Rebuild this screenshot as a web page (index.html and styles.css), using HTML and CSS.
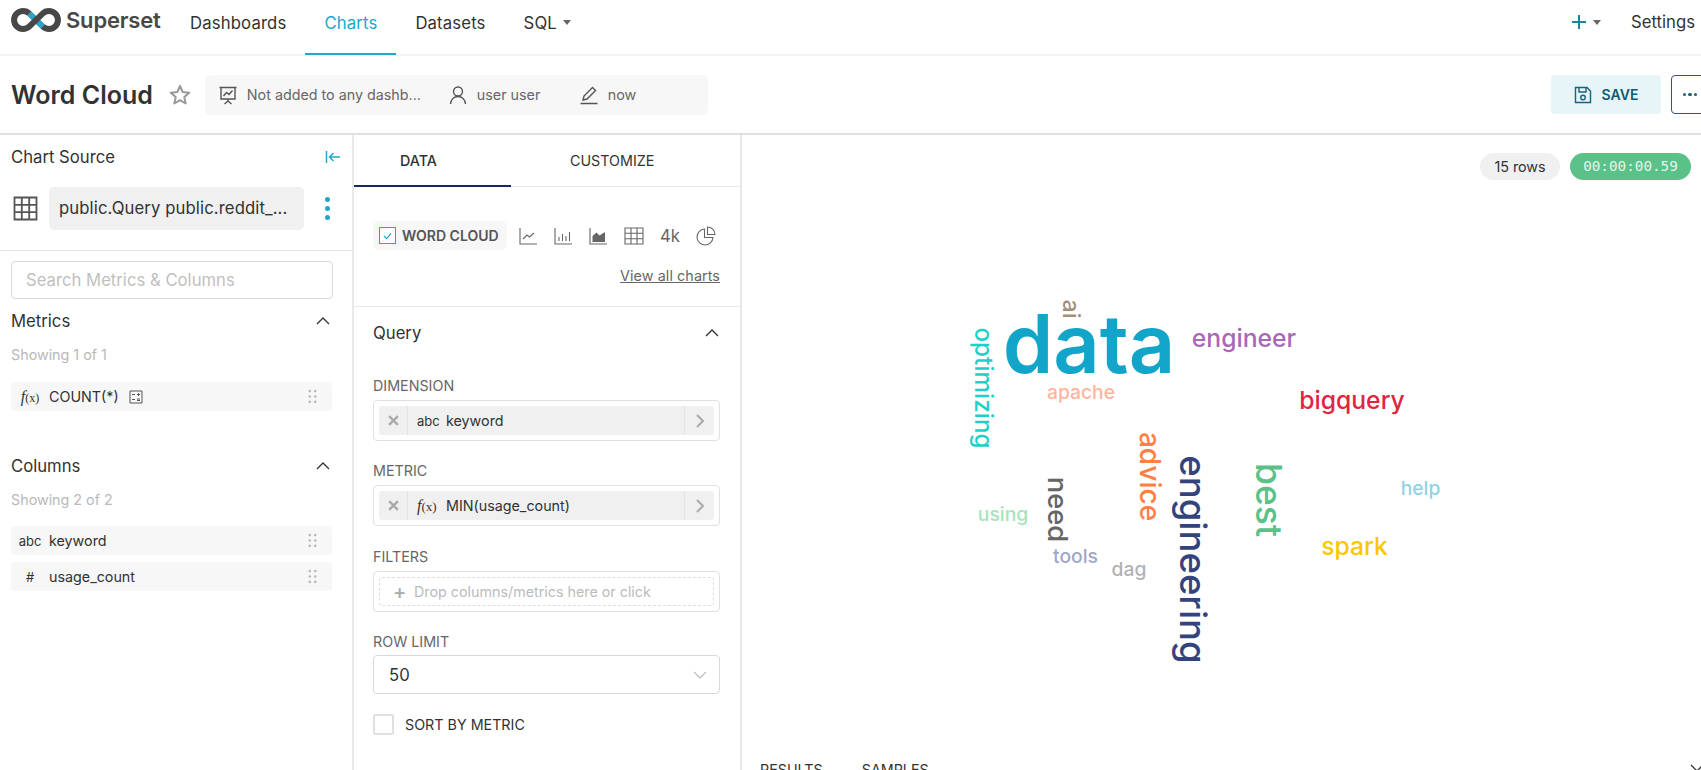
FILE: index.html
```html
<!DOCTYPE html>
<html>
  <head>
    <meta charset="utf-8" />
    <title>Word Cloud</title>
    <link rel="stylesheet" href="styles.css">
  </head>

  <body>
    <!-- top nav -->
    <header class="navbar">
      <div class="brand">
        <svg class="brand-logo" viewBox="0 0 50 24">
          <path class="logo-blue" d="M18.4 5.6L31.6 18.4" />
          <path class="logo-dark" d="M18.4 5.6A9 9 0 1 0 18.4 18.4L31.6 5.6A9 9 0 1 1 31.6 18.4" />
        </svg>
        <span class="brand-name">Superset</span>
      </div>
      <nav class="nav-links">
        <a class="nav-link">Dashboards</a>
        <a class="nav-link active">Charts</a>
        <a class="nav-link">Datasets</a>
        <a class="nav-link">SQL <i class="caret"></i></a>
      </nav>
      <div class="nav-right">
        <svg class="nav-plus" viewBox="0 0 16 16"><path d="M8 1V15M1 8H15" /></svg>
        <i class="caret"></i>
        <a class="nav-settings">Settings</a>
      </div>
    </header>

    <!-- chart title -->
    <section class="title-bar">
      <h1 class="chart-title">Word Cloud</h1>
      <svg class="star" viewBox="0 0 24 24"><path d="M12 3l2.7 6 6.5.7-4.9 4.4 1.4 6.4L12 17.2l-5.7 3.3 1.4-6.4-4.9-4.4 6.5-.7z" /></svg>
      <div class="meta-bar">
        <div class="meta-item meta-dash">
          <svg class="meta-icon" viewBox="0 0 20 20">
            <path d="M1.5 2.5H18.5M3 2.5V14H17V2.5M10 14V16M10 16L6.5 19M10 16L13.5 19M5.5 11L8.5 7.5L11 9.5L14.5 5.5" />
          </svg>
          <span>Not added to any dashb...</span>
        </div>
        <div class="meta-item meta-user">
          <svg class="meta-icon" viewBox="0 0 20 20">
            <circle cx="10" cy="6.5" r="4.5" />
            <path d="M2.5 19C3 14.5 6 11.5 10 11.5S17 14.5 17.5 19" />
          </svg>
          <span>user user</span>
        </div>
        <div class="meta-item">
          <svg class="meta-icon" viewBox="0 0 20 20">
            <path d="M1.5 18.5H18.5M4 15L5 11L13.5 2.5L16.5 5.5L8 14Z" />
          </svg>
          <span>now</span>
        </div>
      </div>
      <div class="title-actions">
        <button class="btn-save">
          <svg class="save-icon" viewBox="0 0 18 18">
            <path d="M1.5 1.5H13L16.5 5V16.5H1.5ZM5 1.5V6H12V1.5" />
            <circle cx="9" cy="11.5" r="2.3" />
          </svg>
          SAVE
        </button>
        <button class="btn-more"><i></i><i></i><i></i></button>
      </div>
    </section>

    <main class="explore">
      <!-- chart source -->
      <aside class="source-panel">
        <div class="source-top">
          <div class="panel-head">
            <span>Chart Source</span>
            <svg class="collapse-icon" viewBox="0 0 16 14"><path d="M1.5 1V13M15 7H4.5M8.5 3L4.5 7L8.5 11" /></svg>
          </div>
          <div class="source-row">
            <svg class="table-icon" viewBox="0 0 25 25"><path d="M1.5 1.5H23.5V23.5H1.5ZM1.5 8.8H23.5M1.5 16.2H23.5M8.8 1.5V23.5M16.2 1.5V23.5" /></svg>
            <div class="source-name">public.Query public.reddit_...</div>
            <div class="source-dots"><i></i><i></i><i></i></div>
          </div>
        </div>
        <div class="source-search">Search Metrics &amp; Columns</div>

        <div class="list-head">
          <span>Metrics</span>
          <svg class="chevron" viewBox="0 0 14 8"><path d="M1 7L7 1L13 7" /></svg>
        </div>
        <div class="list-count">Showing 1 of 1</div>
        <div class="list-row list-row-metric">
          <span class="type-tag fx"><em>f</em>(x)</span>
          <span>COUNT(*)</span>
          <svg class="calc-icon" viewBox="0 0 14 14"><path d="M1 1H13V13H1ZM3 4.5H6M8 4.5H11M3 9.5H6M8 9H11M8 10.5H11M9.5 3V6" /></svg>
          <svg class="grip" viewBox="0 0 10 16"><use href="#grip-dots" /></svg>
        </div>

        <div class="list-head list-head-columns">
          <span>Columns</span>
          <svg class="chevron" viewBox="0 0 14 8"><path d="M1 7L7 1L13 7" /></svg>
        </div>
        <div class="list-count">Showing 2 of 2</div>
        <div class="list-row">
          <span class="type-tag">abc</span>
          <span>keyword</span>
          <svg class="grip" viewBox="0 0 10 16"><use href="#grip-dots" /></svg>
        </div>
        <div class="list-row list-row-next">
          <span class="type-tag">#</span>
          <span>usage_count</span>
          <svg class="grip" viewBox="0 0 10 16"><use href="#grip-dots" /></svg>
        </div>
      </aside>

      <!-- controls -->
      <section class="control-panel">
        <div class="tabs">
          <div class="tab tab-data">DATA</div>
          <div class="tab tab-custom">CUSTOMIZE</div>
        </div>

        <div class="viz-block">
          <div class="viz-row">
            <div class="viz-active">
              <span class="viz-check">
                <svg viewBox="0 0 10 8"><path d="M1 4L4 7L9 1" /></svg>
              </span>
              WORD CLOUD
            </div>
            <svg class="viz-icon" viewBox="0 0 18 18"><path d="M1 1V17H18M4 12L8 8L10.5 10L15 6" /></svg>
            <svg class="viz-icon" viewBox="0 0 18 18"><path d="M1 1V17H18M5 14V10M8.5 14V7M12 14V9M15.5 14V5" /></svg>
            <svg class="viz-icon" viewBox="0 0 18 18">
              <path d="M1 1V17H18" />
              <path class="solid" d="M3.5 15V9L7.5 5.5L10.5 8.5L16 5V15Z" />
            </svg>
            <svg class="viz-icon viz-table" viewBox="0 0 20 18"><path d="M1 1H19V17H1ZM1 6.3H19M1 11.7H19M7 1V17M13 1V17" /></svg>
            <span class="viz-4k">4k</span>
            <svg class="viz-icon viz-pie" viewBox="0 0 20 20"><path d="M8.5 3A8 8 0 1 0 17 11.5H8.5ZM11.5 1A7.5 7.5 0 0 1 19 8.5H11.5Z" /></svg>
          </div>
          <a class="view-all">View all charts</a>
        </div>

        <div class="query-head">
          <span>Query</span>
          <svg class="chevron" viewBox="0 0 14 8"><path d="M1 7L7 1L13 7" /></svg>
        </div>

        <div class="field field-dimension">
          <div class="field-label">DIMENSION</div>
          <div class="field-box">
            <div class="pill">
              <span class="pill-x"><svg viewBox="0 0 10 10"><path d="M1 1L9 9M9 1L1 9" /></svg></span>
              <span class="pill-body"><span class="pill-type">abc</span>keyword</span>
              <span class="pill-arrow"><svg viewBox="0 0 8 14"><path d="M1 1L7 7L1 13" /></svg></span>
            </div>
          </div>
        </div>

        <div class="field field-metric">
          <div class="field-label">METRIC</div>
          <div class="field-box">
            <div class="pill">
              <span class="pill-x"><svg viewBox="0 0 10 10"><path d="M1 1L9 9M9 1L1 9" /></svg></span>
              <span class="pill-body"><span class="pill-type fx"><em>f</em>(x)</span>MIN(usage_count)</span>
              <span class="pill-arrow"><svg viewBox="0 0 8 14"><path d="M1 1L7 7L1 13" /></svg></span>
            </div>
          </div>
        </div>

        <div class="field">
          <div class="field-label">FILTERS</div>
          <div class="field-box">
            <div class="drop-zone"><span class="drop-plus">+</span>Drop columns/metrics here or click</div>
          </div>
        </div>

        <div class="field field-limit">
          <div class="field-label">ROW LIMIT</div>
          <div class="select-box">
            <span>50</span>
            <svg class="select-arrow" viewBox="0 0 14 8"><path d="M1 1L7 7L13 1" /></svg>
          </div>
        </div>

        <label class="sort-row">
          <span class="sort-check"></span>
          SORT BY METRIC
        </label>
      </section>

      <!-- chart -->
      <section class="chart-panel">
        <div class="chart-stats">
          <span class="stat-rows">15 rows</span>
          <span class="stat-time">00:00:00.59</span>
        </div>
        <svg class="word-cloud" width="959" height="500">
          <text class="w w-data" transform="translate(347 183)">data</text>
          <text class="w w-ai" transform="translate(321 119) rotate(90)">ai</text>
          <text class="w w-optimizing" transform="translate(233 198) rotate(90)">optimizing</text>
          <text class="w w-engineer" transform="translate(502 157)">engineer</text>
          <text class="w w-apache" transform="translate(339 209)">apache</text>
          <text class="w w-bigquery" transform="translate(610 219)">bigquery</text>
          <text class="w w-advice" transform="translate(398 286.5) rotate(90)">advice</text>
          <text class="w w-engineering" transform="translate(438 369.5) rotate(90)">engineering</text>
          <text class="w w-best" transform="translate(514 310) rotate(90)">best</text>
          <text class="w w-need" transform="translate(306 319.5) rotate(90)">need</text>
          <text class="w w-help" transform="translate(678.5 305)">help</text>
          <text class="w w-using" transform="translate(261 331)">using</text>
          <text class="w w-spark" transform="translate(612.5 365)">spark</text>
          <text class="w w-tools" transform="translate(333.5 373)">tools</text>
          <text class="w w-dag" transform="translate(387 386)">dag</text>
        </svg>
        <div class="result-tabs">
          <span>RESULTS</span>
          <span>SAMPLES</span>
          <svg class="result-chevron" viewBox="0 0 14 8"><path d="M1 1L7 7L13 1" /></svg>
        </div>
      </section>
    </main>

    <svg class="svg-defs" width="0" height="0">
      <defs>
        <g id="grip-dots">
          <circle cx="2" cy="2" r="1.5" /><circle cx="8" cy="2" r="1.5" />
          <circle cx="2" cy="8" r="1.5" /><circle cx="8" cy="8" r="1.5" />
          <circle cx="2" cy="14" r="1.5" /><circle cx="8" cy="14" r="1.5" />
        </g>
      </defs>
    </svg>
  </body>
</html>
```

FILE: styles.css
```css
* {
  box-sizing: border-box;
}

body {
  margin: 0;
  height: 770px;
  overflow: hidden;
  background: #fff;
  font-family: "Inter", "Noto Sans", sans-serif;
  font-size: 14.3px;
  color: #323232;
}

svg {
  fill: none;
  flex: none;
}

.svg-defs {
  position: absolute;
}

i,
em {
  font-style: normal;
}

/* top nav */
.navbar {
  display: flex;
  height: 56px;
  border-bottom: 2px solid #f3f3f3;
}

.brand {
  display: flex;
  align-items: center;
  width: 171px;
  padding: 0 0 14px 11px;
}

.brand-logo {
  width: 50px;
  height: 24px;
}

.logo-dark {
  stroke: #484848;
  stroke-width: 6;
}

.logo-blue {
  stroke: #20a7c9;
  stroke-width: 6;
}

.brand-name {
  margin-left: 5px;
  font-size: 22px;
  font-weight: 600;
  letter-spacing: -0.2px;
  color: #484848;
}

.nav-links {
  display: flex;
}

.nav-link {
  display: flex;
  align-items: center;
  gap: 6px;
  height: 55px;
  padding: 0 19px 8px;
  font-size: 16.7px;
  letter-spacing: 0.15px;
  color: #323232;
  border-bottom: 2px solid transparent;
}

.nav-link.active {
  color: #20a7c9;
  border-bottom-color: #20a7c9;
}

.caret {
  display: inline-block;
  border-left: 4px solid transparent;
  border-right: 4px solid transparent;
  border-top: 5px solid #666;
}

.nav-right {
  display: flex;
  align-items: center;
  margin-left: auto;
  padding: 0 6px 10px 0;
}

.nav-plus {
  width: 16px;
  height: 16px;
  margin-right: 6px;
}

.nav-plus path {
  stroke: #1985a0;
  stroke-width: 2;
}

.nav-settings {
  margin-left: 30px;
  font-size: 16.7px;
}

/* title */
.title-bar {
  display: flex;
  align-items: center;
  height: 79px;
  padding-left: 11px;
  border-bottom: 2px solid #e0e0e0;
}

.chart-title {
  margin: 0;
  font-size: 25px;
  font-weight: 600;
  color: #323232;
}

.star {
  width: 24px;
  height: 24px;
  margin-left: 15px;
}

.star path {
  stroke: #999;
  stroke-width: 2;
  stroke-linejoin: round;
}

.meta-bar {
  display: flex;
  align-items: center;
  width: 503px;
  height: 40px;
  margin-left: 13px;
  padding-left: 13px;
  background: #f7f7f7;
  border-radius: 5px;
  color: #666;
}

.meta-item {
  display: flex;
  align-items: center;
  gap: 9px;
}

.meta-dash {
  width: 230px;
}

.meta-user {
  width: 131px;
}

.meta-icon {
  width: 20px;
  height: 20px;
}

.meta-icon path,
.meta-icon circle {
  stroke: #555;
  stroke-width: 1.4;
}

.title-actions {
  display: flex;
  gap: 10px;
  margin-left: auto;
  margin-right: -30px;
}

.btn-save {
  display: flex;
  align-items: center;
  justify-content: center;
  gap: 10px;
  width: 110px;
  height: 39px;
  border: 0;
  border-radius: 4px;
  background: #e7f4f8;
  color: #0c5a70;
  font-family: inherit;
  font-size: 14px;
  font-weight: 600;
}

.save-icon {
  width: 18px;
  height: 18px;
}

.save-icon path,
.save-icon circle {
  stroke: #1a6279;
  stroke-width: 1.4;
}

.btn-more {
  display: flex;
  align-items: center;
  justify-content: center;
  gap: 2px;
  width: 60px;
  height: 39px;
  padding: 0 26px 0 4px;
  background: #fff;
  border: 1.5px solid #1a6279;
  border-radius: 4px;
}

.btn-more i {
  width: 3.5px;
  height: 3.5px;
  flex: none;
  border-radius: 50%;
  background: #1a6279;
}

/* page body */
.explore {
  display: flex;
  height: 635px;
}

.source-panel {
  width: 354px;
  flex: none;
  border-right: 2px solid #e8e8e8;
}

.source-top {
  padding: 0 11px 20px 13px;
  border-bottom: 1px solid #e0e0e0;
}

.panel-head {
  display: flex;
  align-items: center;
  justify-content: space-between;
  height: 44px;
  margin-left: -2px;
  font-size: 16.7px;
}

.collapse-icon {
  width: 16px;
  height: 14px;
}

.collapse-icon path {
  stroke: #20a7c9;
  stroke-width: 1.5;
}

.source-row {
  display: flex;
  align-items: center;
  margin-top: 8px;
}

.table-icon {
  width: 25px;
  height: 25px;
}

.table-icon path {
  stroke: #555;
  stroke-width: 1.8;
}

.source-name {
  width: 255px;
  height: 43px;
  margin-left: 11px;
  padding-left: 10px;
  line-height: 43px;
  background: #f0f0f0;
  border-radius: 5px;
  font-size: 16.7px;
  letter-spacing: 0.1px;
  white-space: nowrap;
}

.source-dots {
  display: flex;
  flex-direction: column;
  gap: 4px;
  margin-left: 21px;
}

.source-dots i {
  width: 5px;
  height: 5px;
  border-radius: 50%;
  background: #20a7c9;
}

.source-search {
  height: 38px;
  margin: 10px 19px 0 11px;
  padding-left: 14px;
  line-height: 36px;
  border: 1px solid #d9d9d9;
  border-radius: 4px;
  color: #bfbfbf;
  font-size: 16.7px;
}

.list-head {
  display: flex;
  align-items: center;
  justify-content: space-between;
  height: 22px;
  margin: 11px 22px 0 11px;
  font-size: 16.7px;
}

.list-head-columns {
  margin-top: 44px;
}

.chevron {
  width: 14px;
  height: 8px;
}

.chevron path,
.result-chevron path {
  stroke: #333;
  stroke-width: 1.3;
}

.list-count {
  height: 18px;
  margin: 14px 0 0 11px;
  line-height: 18px;
  color: #b9b9b9;
}

.list-row {
  display: flex;
  align-items: center;
  height: 29px;
  margin: 17px 20px 0 11px;
  background: #f7f7f7;
  border-radius: 4px;
}

.list-row-metric {
  margin-top: 18px;
}

.list-row-next {
  margin-top: 7px;
}

.type-tag {
  width: 38px;
  flex: none;
  text-align: center;
  font-size: 13px;
}

.fx {
  font-family: "Liberation Serif", serif;
  font-size: 12px;
}

.fx em {
  font-style: italic;
  font-size: 16px;
}

.calc-icon {
  width: 14px;
  height: 14px;
  margin-left: 10px;
}

.calc-icon path {
  stroke: #555;
  stroke-width: 1;
}

.grip {
  width: 9px;
  height: 15px;
  margin-left: auto;
  margin-right: 15px;
  fill: #bbb;
}

/* controls */
.control-panel {
  width: 388px;
  flex: none;
  border-right: 2px solid #e8e8e8;
}

.tabs {
  display: flex;
  height: 52px;
  border-bottom: 1px solid #eaeaea;
}

.tab {
  line-height: 51px;
}

.tab-data {
  width: 157px;
  height: 52px;
  padding-left: 46px;
  font-weight: 500;
  border-bottom: 2px solid #1a2566;
}

.tab-custom {
  padding-left: 59px;
}

.viz-block {
  height: 120px;
  padding: 34px 20px 0 19px;
  border-bottom: 1px solid #eaeaea;
}

.viz-row {
  display: flex;
  align-items: center;
  height: 29px;
}

.viz-active {
  display: flex;
  align-items: center;
  gap: 6px;
  width: 134px;
  height: 29px;
  padding-left: 6px;
  background: #f7f7f7;
  border-radius: 6px;
  color: #555;
  font-size: 14px;
  font-weight: 600;
  white-space: nowrap;
}

.viz-check {
  display: flex;
  align-items: center;
  justify-content: center;
  width: 17px;
  height: 17px;
  background: #fff;
  border: 1.5px solid #20a7c9;
}

.viz-check svg {
  width: 9px;
  height: 8px;
}

.viz-check path {
  stroke: #20a7c9;
  stroke-width: 1.3;
}

.viz-icon {
  width: 18px;
  height: 18px;
  margin-left: 17px;
}

.viz-active + .viz-icon {
  margin-left: 12px;
}

.viz-icon path {
  stroke: #666;
  stroke-width: 1.1;
}

.viz-icon path.solid {
  fill: #666;
  stroke: none;
}

.viz-table {
  width: 20px;
}

.viz-4k {
  margin-left: 16px;
  font-size: 16.7px;
  color: #666;
}

.viz-pie {
  width: 20px;
  height: 20px;
  margin-left: 16px;
}

.view-all {
  display: block;
  margin-top: 16px;
  line-height: 20px;
  text-align: right;
  color: #666;
  letter-spacing: 0.1px;
  text-decoration: underline;
}

.query-head {
  display: flex;
  align-items: center;
  justify-content: space-between;
  height: 24px;
  margin: 14px 21px 0 19px;
  font-size: 16.7px;
}

.field {
  margin: 22px 20px 0 19px;
}

.field-dimension {
  margin-top: 32px;
}

.field-metric,
.field-limit {
  margin-top: 21px;
}

.field-label {
  height: 18px;
  margin-bottom: 5px;
  line-height: 18px;
  color: #666;
}

.field-box {
  height: 41px;
  padding: 5px;
  border: 1px solid #e0e0e0;
  border-radius: 4px;
}

.pill {
  display: flex;
  align-items: center;
  height: 29px;
  background: #f0f0f0;
  border-radius: 3px;
}

.pill-x {
  display: flex;
  align-items: center;
  justify-content: center;
  width: 29px;
  height: 29px;
  flex: none;
  border-right: 1px solid #e4e4e4;
}

.pill-x svg {
  width: 11px;
  height: 11px;
}

.pill-x path {
  stroke: #aaa;
  stroke-width: 2.2;
}

.pill-body {
  display: flex;
  align-items: center;
  flex: 1;
  padding-left: 9px;
}

.pill-type {
  width: 29px;
  flex: none;
  font-size: 13px;
}

.pill-arrow {
  display: flex;
  align-items: center;
  justify-content: center;
  width: 30px;
  height: 29px;
  flex: none;
  border-left: 1px solid #e4e4e4;
}

.pill-arrow svg {
  width: 8px;
  height: 14px;
}

.pill-arrow path {
  stroke: #aaa;
  stroke-width: 2;
}

.drop-zone {
  display: flex;
  align-items: center;
  height: 29px;
  padding-left: 13px;
  border: 1px dashed #ddd;
  border-radius: 3px;
  color: #bbb;
  white-space: nowrap;
}

.drop-plus {
  width: 21px;
  flex: none;
  font-size: 20px;
  font-weight: 500;
  color: #aaa;
}

.select-box {
  display: flex;
  align-items: center;
  justify-content: space-between;
  height: 39px;
  margin-top: -1px;
  padding: 0 12px 0 15px;
  border: 1px solid #d9d9d9;
  border-radius: 4px;
  font-size: 16.7px;
}

.select-arrow {
  width: 14px;
  height: 8px;
}

.select-arrow path {
  stroke: #bbb;
  stroke-width: 1.1;
}

.sort-row {
  display: flex;
  align-items: center;
  gap: 11px;
  margin: 20px 0 0 19px;
}

.sort-check {
  width: 21px;
  height: 21px;
  border: 2px solid #e0e0e0;
  border-radius: 2px;
}

/* chart */
.chart-panel {
  flex: 1;
  min-width: 0;
}

.chart-stats {
  display: flex;
  justify-content: flex-end;
  gap: 10px;
  height: 55px;
  padding: 18px 10px 0 0;
}

.stat-rows,
.stat-time {
  height: 27px;
  line-height: 27px;
  border-radius: 14px;
  text-align: center;
}

.stat-rows {
  width: 80px;
  background: #f0f0f0;
  font-size: 14.3px;
}

.stat-time {
  width: 121px;
  background: #5ac189;
  color: #e4f6ec;
  font-family: "DejaVu Sans Mono", monospace;
  font-size: 14.3px;
}

.word-cloud {
  display: block;
}

.w {
  text-anchor: middle;
  font-weight: 500;
  font-size: 19.3px;
}

.w-data { font-size: 81px; font-weight: 600; fill: #13a5c9; }
.w-ai { font-size: 23px; fill: #a38f79; }
.w-optimizing { font-size: 24.3px; fill: #1fd0c8; }
.w-engineer { font-size: 24.7px; fill: #a868b7; }
.w-apache { fill: #ffb4a0; }
.w-bigquery { font-size: 24.7px; fill: #e0253f; }
.w-advice { font-size: 28px; fill: #ff7f44; }
.w-engineering { font-size: 36.5px; fill: #33437c; }
.w-best { font-size: 35.5px; fill: #5ac189; }
.w-need { font-size: 27.4px; fill: #666; }
.w-help { fill: #8fd3e4; }
.w-using { fill: #a6e3bd; }
.w-spark { font-size: 24.7px; fill: #fcc700; }
.w-tools { fill: #a0a7c4; }
.w-dag { fill: #b2b2b2; }

.result-tabs {
  display: flex;
  align-items: flex-start;
  gap: 39px;
  height: 30px;
  margin-top: 71px;
  padding-left: 18px;
  line-height: 18px;
}

.result-chevron {
  width: 14px;
  height: 8px;
  margin-left: auto;
  margin-top: 3px;
  margin-right: -3px;
}
```
